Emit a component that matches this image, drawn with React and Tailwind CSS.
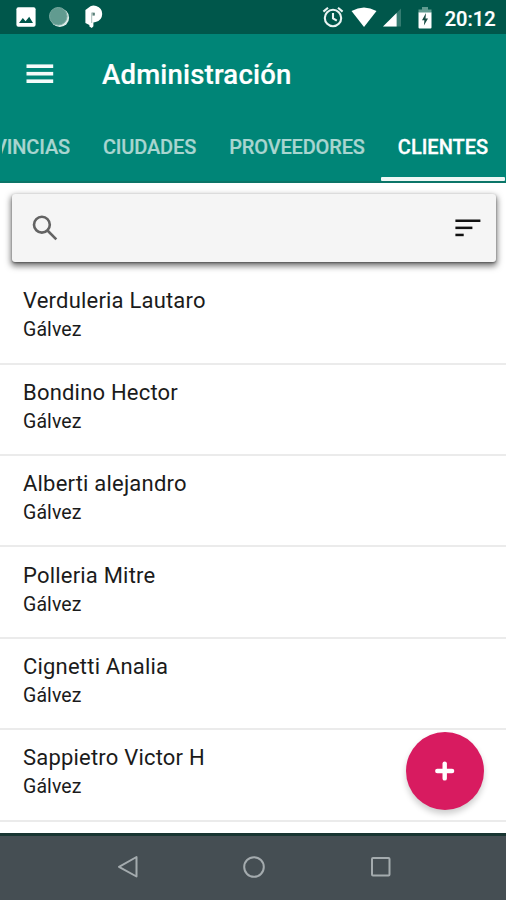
import React from "react";

const clients = [
  "Verduleria Lautaro",
  "Bondino Hector",
  "Alberti alejandro",
  "Polleria Mitre",
  "Cignetti Analia",
  "Sappietro Victor H",
];

function StatusBar() {
  return (
    <div className="flex h-[34px] shrink-0 items-center bg-[#00574b] text-white">
      <svg className="ml-4 h-5 w-5" viewBox="0 0 20 20">
        <rect x="0.4" y="0.3" width="19.2" height="19.4" rx="2" fill="#fff" />
        <path d="M3 16 6.8 11 9.6 14.2 13.2 9.8 17 16Z" fill="#00574b" />
      </svg>
      <svg className="ml-[13px] h-[21px] w-[21px]" viewBox="0 0 21 21">
        <circle cx="10.8" cy="10.7" r="9.3" fill="#dcebe8" />
        <circle cx="9.3" cy="9.3" r="8.7" fill="#619b90" />
        <circle cx="9.3" cy="9.3" r="8.8" fill="none" stroke="#7aaaa1" strokeWidth="1" />
      </svg>
      <svg className="ml-[14px] h-6 w-5" viewBox="0 0 20 24">
        <path d="M1.4 5 6.5 1.2Q9.5 0.1 12.2 1.1 18.2 3.1 18.2 9 18 15.5 11.6 17L9.4 17.6V21.2L7.8 23 5.4 21.5V20L1.4 18Z" fill="#fff" />
        <path d="M7.7 18V7.8H10.5V10.5H8.5" fill="none" stroke="#a9bfbb" strokeWidth="1" />
        <rect x="8.5" y="8" width="2.2" height="2.2" fill="#597e77" />
      </svg>
      <svg className="ml-auto h-[22px] w-[22px]" viewBox="0 0 22 22" fill="none" stroke="#eaf4f2" strokeWidth="2.1">
        <circle cx="11" cy="12" r="8.2" />
        <path d="M11 7V12.3L14.8 14.6M1.4 5.6 6 1.8M20.6 5.6 16 1.8" />
      </svg>
      <svg className="ml-[7px] h-[20px] w-[26px]" viewBox="0 0 26 20">
        <path d="M0.5 4Q13-3 25.5 4L13 20Z" fill="#fff" />
      </svg>
      <svg className="ml-[6px] h-[19px] w-[18px]" viewBox="0 0 18 19">
        <path d="M0 18.5 18 0.5V18.5Z" fill="#357c71" />
        <path d="M0 18.5 13.6 4.9V18.5Z" fill="#fff" />
      </svg>
      <svg className="mt-px ml-[17px] h-[22px] w-[14px]" viewBox="0 0 14 22">
        <path d="M4 0H10V2.5H13.5V6H0.5V2.5H4Z" fill="#619b90" />
        <path d="M0.5 5.5H13.5V20.5Q13.5 21.5 12.5 21.5H1.5Q0.5 21.5 0.5 20.5Z" fill="#fff" />
        <path d="M8 6 4 13.3H6.4L5.9 18.5 10 11.5H7.5Z" fill="#174c43" />
      </svg>
      <span className="mt-[3px] mr-[10.5px] ml-[13px] text-[20px] leading-6 font-medium [-webkit-text-stroke:0.2px_white]">20:12</span>
    </div>
  );
}

function Header() {
  return (
    <header className="h-[149px] shrink-0 border-b-2 border-[#0b7568] bg-[#008577]">
      <div className="flex h-[79px] items-center pl-[26px] text-white">
        <svg className="h-5 w-[28px]" viewBox="0 0 28 20" fill="#f5fbfa">
          <rect y="0.4" x="0.5" width="26.7" height="3.6" />
          <rect y="7.9" x="0.5" width="26.7" height="3.6" />
          <rect y="15.4" x="0.5" width="26.7" height="3.6" />
        </svg>
        <h1 className="mt-[2.5px] ml-[48px] text-[27.5px] leading-8 font-medium tracking-[0.2px] [-webkit-text-stroke:0.2px_white]">Administración</h1>
      </div>
      <nav className="flex h-[68px] text-[20px] leading-[69px] font-medium tracking-[-0.15px] whitespace-nowrap text-[#a9d5d0]">
        <span className="flex w-[86px] shrink-0 justify-end pr-[16px]">
          <span className="flex w-[68px] justify-end overflow-hidden [-webkit-text-stroke:0.2px_#a9d5d0]">PROVINCIAS</span>
        </span>
        <span className="w-[127px] shrink-0 text-center [-webkit-text-stroke:0.2px_#a9d5d0]">CIUDADES</span>
        <span className="w-[168px] shrink-0 text-center [-webkit-text-stroke:0.2px_#a9d5d0]">PROVEEDORES</span>
        <span className="flex h-[68px] w-[124px] shrink-0 flex-col justify-between text-center text-white">
          <span className="h-16 tracking-normal [-webkit-text-stroke:0.3px_white]">CLIENTES</span>
          <span className="h-1 rounded-[1px] bg-[#eef7f5]" />
        </span>
      </nav>
    </header>
  );
}

export default function App() {
  return (
    <div className="flex h-[900px] w-[506px] flex-col overflow-hidden bg-white font-['Roboto','Liberation_Sans',sans-serif]">
      <StatusBar />
      <Header />
      <main className="relative h-[650px] shrink-0 overflow-hidden">
        <div className="mt-[11px] mr-[10px] ml-3 flex h-[68px] items-center justify-between rounded-[3px] bg-[#f5f5f5] pr-[15.5px] pl-[20px] shadow-[0_3px_6px_1px_rgba(0,0,0,.55),0_1px_2px_rgba(0,0,0,.35)]">
          <svg className="h-[26px] w-[26px]" viewBox="0 0 26 26" fill="none" stroke="#636363" strokeWidth="2.6">
            <circle cx="9.9" cy="9.7" r="7.9" />
            <path d="M15.5 15.5 24.3 24.3" />
          </svg>
          <svg className="h-[18px] w-[26px]" viewBox="0 0 26 18" fill="#111">
            <rect x="0.4" y="0.5" width="25" height="2.5" />
            <rect x="0.4" y="7.6" width="17" height="2.5" />
            <rect x="0.4" y="14.7" width="8.3" height="2.5" />
          </svg>
        </div>
        <ul className="mt-[11.2px]">
          {clients.map((name) => (
            <li key={name} className="h-[91.4px] border-b-2 border-[#ebebeb] pt-[13.3px] pl-[23px] text-[#1b1b1b]">
              <p className="text-[22px] leading-[30px] tracking-[0.2px]">{name}</p>
              <p className="text-[19.5px] leading-[27px] tracking-[0.1px]">Gálvez</p>
            </li>
          ))}
        </ul>
        <button className="absolute top-[549px] left-[406px] flex h-[78px] w-[78px] items-center justify-center rounded-full bg-[#d81b60] shadow-[0_4px_6px_rgba(0,0,0,.2)]">
          <svg className="h-5 w-5" viewBox="0 0 20 20" stroke="#fff" strokeWidth="4.4" strokeLinecap="round">
            <path d="M9.7 2.6V17.4M2.3 10H17.1" />
          </svg>
        </button>
      </main>
      <footer className="flex h-[67px] shrink-0 items-center justify-center gap-[104px] border-t-[3px] border-[#183532] bg-[#454e53] pb-[3px] pl-px">
        <svg className="h-[24px] w-[22px]" viewBox="0 0 22 24" fill="none" stroke="#a4abae" strokeWidth="2" strokeLinejoin="round">
          <path d="M20.5 2V21.5L3 11.8Z" />
        </svg>
        <svg className="h-[24px] w-[24px]" viewBox="0 0 24 24" fill="none" stroke="#a4abae" strokeWidth="2">
          <circle cx="12" cy="12" r="9.8" />
        </svg>
        <svg className="h-[22px] w-[22px]" viewBox="0 0 22 22" fill="none" stroke="#a4abae" strokeWidth="2">
          <rect x="2" y="2" width="17.5" height="17.5" rx="1" />
        </svg>
      </footer>
    </div>
  );
}
